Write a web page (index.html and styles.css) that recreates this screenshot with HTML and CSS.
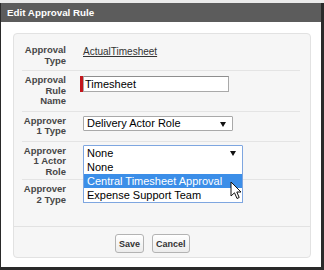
FILE: index.html
```html
<!DOCTYPE html>
<html lang="en">
<head>
    <meta charset="UTF-8">
    <title>Edit Approval Rule</title>
    <link rel="stylesheet" href="styles.css">
</head>
<body>
    <div class="dialog">
        <div class="dialog-head">Edit Approval Rule</div>
        <div class="dialog-body">
            <div class="panel">
                <div class="rows">
                    <div class="row">
                        <div class="label">Approval Type</div>
                        <div class="field"><a class="link" href="#">ActualTimesheet</a></div>
                    </div>
                    <div class="row">
                        <div class="label">Approval Rule Name</div>
                        <div class="field">
                            <div class="required"><div class="input">Timesheet</div></div>
                        </div>
                    </div>
                    <div class="row">
                        <div class="label">Approver 1 Type</div>
                        <div class="field">
                            <div class="select select-type">Delivery Actor Role<span class="arrow"></span></div>
                        </div>
                    </div>
                    <div class="row open">
                        <div class="label">Approver 1 Actor Role</div>
                        <div class="field">
                            <div class="dropdown">
                                <div class="select select-role focused">None<span class="arrow"></span></div>
                                <div class="options">
                                    <div class="option">None</div>
                                    <div class="option selected">Central Timesheet Approval</div>
                                    <div class="option">Expense Support Team</div>
                                </div>
                                <svg class="cursor" width="13" height="19" viewBox="0 0 13 19">
                                    <path d="M1 1 L1 15 L4.5 11.8 L7 17.5 L9.2 16.5 L6.8 11 L11 11 Z" fill="#fff" stroke="#111" stroke-width="1" stroke-linejoin="round"/>
                                </svg>
                            </div>
                        </div>
                    </div>
                    <div class="row last">
                        <div class="label">Approver 2 Type</div>
                        <div class="field"></div>
                    </div>
                </div>
                <div class="buttons">
                    <button class="btn">Save</button>
                    <button class="btn">Cancel</button>
                </div>
            </div>
        </div>
    </div>
</body>
</html>
```

FILE: styles.css
```css
*{
    padding: 0;
    margin: 0;
    box-sizing: border-box;
}
body{
    background-color: #ebebeb;
    font-family: "Liberation Sans", Arial, sans-serif;
    width: 324px;
    height: 270px;
    overflow: hidden;
    padding-top: 3px;
}
.dialog{
    height: 267px;
    border-left: 1px solid #2a2a2a;
    border-right: 3px solid #2a2a2a;
    border-bottom: 3px solid #2a2a2a;
    background-color: #fff;
    display: flex;
    flex-direction: column;
}
.dialog-head{
    height: 19px;
    background-color: #5c5c5c;
    color: #fff;
    font-size: 9.8px;
    font-weight: bold;
    line-height: 19px;
    padding-left: 6px;
}
.dialog-body{
    flex: 1;
    padding: 11px 10px 9px 12px;
}
.panel{
    height: 100%;
    background-color: #f6f6f6;
    border: 1px solid #e2e2e2;
    border-radius: 4px;
    display: flex;
    flex-direction: column;
}
.rows{
    flex: 1;
    padding: 7px 10px 0 8px;
}
.row{
    display: flex;
    align-items: flex-start;
    column-gap: 17px;
    padding: 4px 0;
    border-bottom: 1px solid #e4e4e4;
}
.row.open{
    padding-bottom: 2px;
}
.row.last{
    border-bottom: none;
}
.label{
    width: 44px;
    flex: none;
    text-align: right;
    font-size: 9.5px;
    font-weight: bold;
    line-height: 10.5px;
    color: #474747;
}
.field{
    flex: 1;
    font-size: 11px;
    color: #000;
}
.link{
    font-size: 10px;
    line-height: 10.5px;
    color: #333;
    text-decoration: underline;
}
.required{
    margin-top: 1px;
    margin-left: -3px;
    border-left: 3px solid #c4161c;
    width: 149px;
}
.input{
    height: 16px;
    border: 1px solid #a9a9a9;
    border-top-color: #8e8e8e;
    background-color: #fff;
    line-height: 14px;
    padding-left: 1px;
}
.select{
    position: relative;
    height: 15px;
    border: 1px solid #a9a9a9;
    border-radius: 1px;
    background-color: #fff;
    line-height: 13px;
    padding-left: 3px;
}
.select-type{
    width: 150px;
}
.select-role{
    width: 160px;
    height: 16px;
    line-height: 14px;
    margin-top: -1px;
}
.focused{
    border-color: #7ea6e0;
}
.arrow{
    position: absolute;
    right: 6px;
    top: 5px;
    border-left: 3.5px solid transparent;
    border-right: 3.5px solid transparent;
    border-top: 5px solid #111;
}
.dropdown{
    position: relative;
}
.options{
    position: absolute;
    left: 0;
    top: 15px;
    width: 160px;
    border: 1px solid #7ea6e0;
    border-top: none;
    background-color: #fff;
    z-index: 2;
}
.option{
    height: 14px;
    line-height: 14px;
    padding-left: 3px;
}
.option.selected{
    background-color: #3b8ee8;
    color: #fff;
}
.cursor{
    position: absolute;
    left: 147px;
    top: 36px;
    z-index: 3;
}
.buttons{
    border-top: 1px solid #e2e2e2;
    padding: 7px 0 4px 101px;
    display: flex;
    column-gap: 8px;
}
.btn{
    height: 19px;
    padding: 0 3px;
    border: 1px solid #b3b3b3;
    border-radius: 3px;
    background: linear-gradient(#ffffff, #ececec);
    font-family: "Liberation Sans", Arial, sans-serif;
    font-size: 9px;
    font-weight: bold;
    color: #333;
}
```
